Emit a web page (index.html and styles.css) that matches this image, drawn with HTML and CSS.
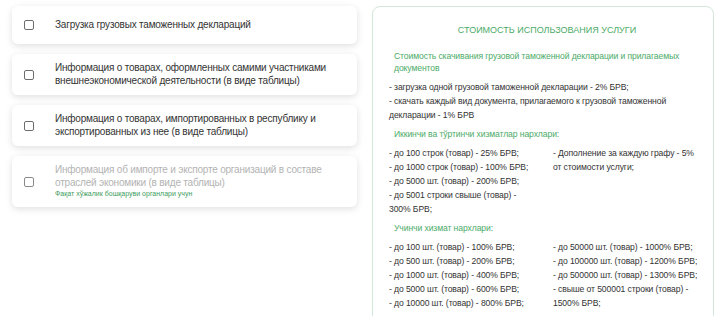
FILE: index.html
```html
<!DOCTYPE html>
<html lang="ru">
<head>
    <meta charset="UTF-8">
    <meta name="viewport" content="width=device-width, initial-scale=1.0">
    <title>Услуги</title>
    <link rel="stylesheet" href="styles.css">
</head>
<body>

    <div class="page">
        <!-- список услуг -->
        <div class="services">
            <label class="service-item">
                <span class="check"></span>
                <span class="service-text">Загрузка грузовых таможенных деклараций</span>
            </label>
            <label class="service-item">
                <span class="check"></span>
                <span class="service-text">Информация о товарах, оформленных самими участниками внешнеэкономической деятельности (в виде таблицы)</span>
            </label>
            <label class="service-item">
                <span class="check"></span>
                <span class="service-text">Информация о товарах, импортированных в республику и экспортированных из нее (в виде таблицы)</span>
            </label>
            <label class="service-item disabled">
                <span class="check"></span>
                <span class="service-text">
                    Информация об импорте и экспорте организаций в составе отраслей экономики (в виде таблицы)
                    <small class="note">Фақат хўжалик бошқаруви органлари учун</small>
                </span>
            </label>
        </div>

        <!-- стоимость -->
        <div class="price-box">
            <h2 class="price-title">СТОИМОСТЬ ИСПОЛЬЗОВАНИЯ УСЛУГИ</h2>

            <h3 class="price-subtitle first">Стоимость скачивания грузовой таможенной декларации и прилагаемых документов</h3>
            <p>- загрузка одной грузовой таможенной декларации - 2% БРВ;</p>
            <p>- скачать каждый вид документа, прилагаемого к грузовой таможенной декларации - 1% БРВ</p>

            <h3 class="price-subtitle">Иккинчи ва тўртинчи хизматлар нархлари:</h3>
            <div class="price-cols">
                <div>
                    <p>- до 100 строк (товар) - 25% БРВ;</p>
                    <p>- до 1000 строк (товар) - 100% БРВ;</p>
                    <p>- до 5000 шт. (товар) - 200% БРВ;</p>
                    <p>- до 5001 строки свыше (товар) - 300% БРВ;</p>
                </div>
                <div>
                    <p>- Дополнение за каждую графу - 5% от стоимости услуги;</p>
                </div>
            </div>

            <h3 class="price-subtitle">Учинчи хизмат нархлари:</h3>
            <div class="price-cols">
                <div>
                    <p>- до 100 шт. (товар) - 100% БРВ;</p>
                    <p>- до 500 шт. (товар) - 200% БРВ;</p>
                    <p>- до 1000 шт. (товар) - 400% БРВ;</p>
                    <p>- до 5000 шт. (товар) - 600% БРВ;</p>
                    <p>- до 10000 шт. (товар) - 800% БРВ;</p>
                </div>
                <div>
                    <p>- до 50000 шт. (товар) - 1000% БРВ;</p>
                    <p>- до 100000 шт. (товар) - 1200% БРВ;</p>
                    <p>- до 500000 шт. (товар) - 1300% БРВ;</p>
                    <p>- свыше от 500001 строки (товар) - 1500% БРВ;</p>
                </div>
            </div>
        </div>
    </div>

</body>
</html>
```

FILE: styles.css
```css
/* общие стили */
body {
    font-family: "Liberation Sans", Arial, sans-serif;
    margin: 0;
    padding: 0;
    background-color: #fff;
    color: #333;
    overflow: hidden;
}

.page {
    display: grid;
    grid-template-columns: 345px 342px;
    gap: 15px;
    align-items: start;
    padding: 6px 6px 0 12px;
}

/* карточки услуг */
.services {
    display: flex;
    flex-direction: column;
    gap: 10px;
}

.service-item {
    display: flex;
    align-items: center;
    min-height: 38px;
    padding: 8px 12px;
    box-sizing: border-box;
    background-color: #fff;
    border-radius: 6px;
    box-shadow: 0 2px 7px rgba(0, 0, 0, 0.13);
    font-size: 10px;
    letter-spacing: -0.2px;
    line-height: 12.5px;
}

.check {
    flex: none;
    width: 8px;
    height: 8px;
    border: 1px solid #6d6d6d;
    border-radius: 2px;
    margin-right: 21px;
}

.service-text {
    display: flex;
    flex-direction: column;
}

.disabled .service-text {
    color: #b3b3b3;
}

.disabled .check {
    border-color: #8a8a8a;
}

.note {
    font-size: 7px;
    letter-spacing: 0;
    line-height: 10px;
    color: #3e9c5d;
}

/* блок стоимости */
.price-box {
    border: 1.5px solid #d3e6da;
    border-radius: 8px;
    padding: 16px 8px 20px 16px;
    height: 330px;
    box-sizing: border-box;
    font-size: 8.6px;
    letter-spacing: -0.1px;
    line-height: 14px;
}

.price-title {
    margin: 0;
    text-align: center;
    font-size: 9px;
    font-weight: normal;
    letter-spacing: 0;
    line-height: 14px;
    color: #4cab68;
}

.price-subtitle {
    margin: 5px 0 5px 5px;
    font-size: 8.6px;
    font-weight: normal;
    line-height: 14px;
    color: #4cab68;
}

.price-subtitle.first {
    margin-top: 14px;
    margin-bottom: 6px;
    line-height: 11.5px;
}

.price-box p {
    margin: 0;
}

.price-cols {
    display: grid;
    grid-template-columns: 146px 150px;
    column-gap: 18px;
}
```
